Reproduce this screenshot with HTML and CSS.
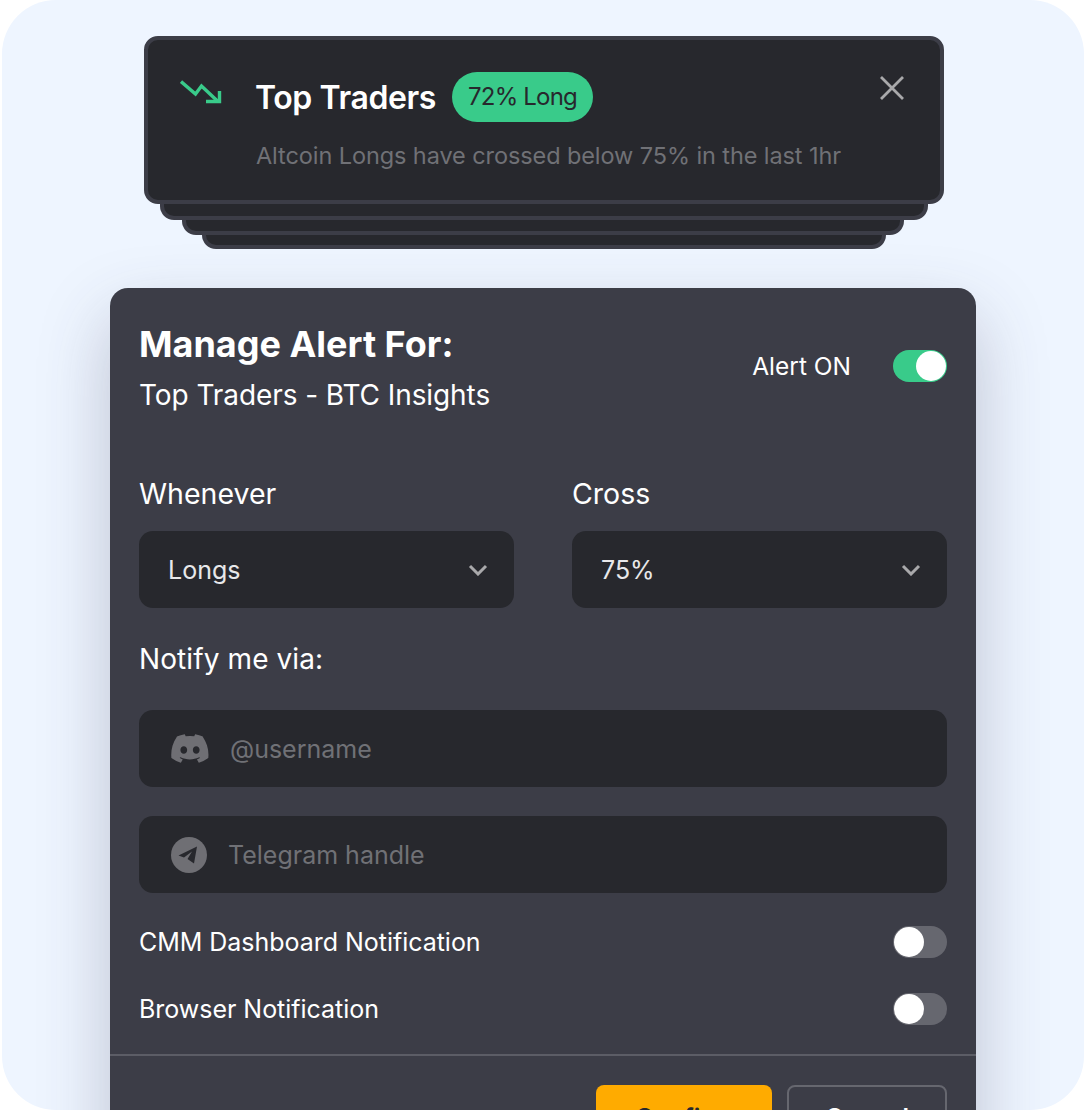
FILE: index.html
```html
<!DOCTYPE html>
<html lang="en">
<head>
    <meta charset="UTF-8">
    <meta name="viewport" content="width=device-width, initial-scale=1.0">
    <title>Manage Alert</title>
    <link rel="stylesheet" href="styles.css">
</head>
<body>
    <div class="frame">
        <!-- Notification stack -->
        <div class="stack">
            <div class="toast">
                <svg class="trend-icon" width="42" height="26" viewBox="0 0 42 26" fill="none" stroke="#39cb8a" stroke-width="3.400">
                    <path d="M1 1.500 L15.500 14 L21.500 6 L38 21.500"/>
                    <path d="M26 21.500 H39.500 V11"/>
                </svg>
                <div class="toast-body">
                    <div class="toast-title">
                        <h2>Top Traders</h2>
                        <span class="pill">72% Long</span>
                    </div>
                    <p>Altcoin Longs have crossed below 75% in the last 1hr</p>
                </div>
                <svg class="close-icon" width="26" height="26" viewBox="0 0 26 26" fill="none" stroke="#a9a9ab" stroke-width="2.800">
                    <path d="M2 2 L24 24 M24 2 L2 24"/>
                </svg>
            </div>
            <div class="layer layer-1"></div>
            <div class="layer layer-2"></div>
            <div class="layer layer-3"></div>
        </div>

        <!-- Alert form -->
        <div class="panel">
            <div class="panel-head">
                <div>
                    <h1>Manage Alert For:</h1>
                    <p class="subtitle">Top Traders - BTC Insights</p>
                </div>
                <div class="alert-state">
                    <span>Alert ON</span>
                    <span class="toggle on"></span>
                </div>
            </div>

            <div class="selects">
                <div class="field">
                    <label>Whenever</label>
                    <div class="box select">
                        <span>Longs</span>
                        <svg width="20" height="12" viewBox="0 0 20 12" fill="none" stroke="#a9a9ab" stroke-width="3"><path d="M2 2 L10 10 L18 2"/></svg>
                    </div>
                </div>
                <div class="field">
                    <label>Cross</label>
                    <div class="box select">
                        <span>75%</span>
                        <svg width="20" height="12" viewBox="0 0 20 12" fill="none" stroke="#a9a9ab" stroke-width="3"><path d="M2 2 L10 10 L18 2"/></svg>
                    </div>
                </div>
            </div>

            <div class="notify-label">Notify me via:</div>

            <div class="box handle">
                <svg width="38" height="29" viewBox="0 0 71 55" fill="#6f6f74">
                    <path d="M60.100 4.900A58.500 58.500 0 0 0 45.500 .4a.2.2 0 0 0-.2.1c-.6 1.100-1.300 2.600-1.800 3.700a54 54 0 0 0-16.200 0A37 37 0 0 0 25.500.5a.2.2 0 0 0-.2-.1A58.300 58.300 0 0 0 10.700 4.900a.2.2 0 0 0-.1.1C1.500 18.700-1 32.100.2 45.300a.2.2 0 0 0 .1.2 58.800 58.800 0 0 0 17.700 9 .2.2 0 0 0 .2-.1 42 42 0 0 0 3.600-5.900.2.2 0 0 0-.1-.3 38.700 38.700 0 0 1-5.500-2.600.2.2 0 0 1 0-.4l1.100-.9a.2.2 0 0 1 .2 0c11.500 5.300 24 5.300 35.400 0a.2.2 0 0 1 .2 0l1.100.9a.2.2 0 0 1 0 .4 36.300 36.300 0 0 1-5.500 2.600.2.2 0 0 0-.1.3 47.200 47.200 0 0 0 3.600 5.900.2.2 0 0 0 .2.1 58.600 58.600 0 0 0 17.700-9 .2.2 0 0 0 .1-.2c1.500-15.200-2.500-28.500-10.500-40.300a.2.2 0 0 0-.1-.1zM23.700 37.300c-3.500 0-6.400-3.200-6.400-7.100s2.800-7.100 6.400-7.100c3.600 0 6.500 3.200 6.400 7.100 0 3.900-2.800 7.100-6.400 7.100zm23.600 0c-3.500 0-6.400-3.200-6.400-7.100s2.800-7.100 6.400-7.100c3.600 0 6.500 3.200 6.400 7.100 0 3.900-2.800 7.100-6.400 7.100z"/>
                </svg>
                <span class="placeholder">@username</span>
            </div>

            <div class="box handle">
                <svg width="36" height="36" viewBox="0 0 36 36">
                    <circle cx="18" cy="18" r="18" fill="#6f6f74"/>
                    <path d="M7.500 18.500 L26 9.500 L23 26.500 L16.500 22 L21 14.500 L13 20.500 Z" fill="#27282d"/>
                </svg>
                <span class="placeholder">Telegram handle</span>
            </div>

            <div class="check-rows">
                <div class="check-row">
                    <span>CMM Dashboard Notification</span>
                    <span class="toggle"></span>
                </div>
                <div class="check-row">
                    <span>Browser Notification</span>
                    <span class="toggle"></span>
                </div>
            </div>

            <div class="panel-foot">
                <button class="btn-primary">Confirm</button>
                <button class="btn-ghost">Cancel</button>
            </div>
        </div>
    </div>
</body>
</html>
```

FILE: styles.css
```css
* {
    margin: 0;
    padding: 0;
    box-sizing: border-box;
    font-family: Inter, "Noto Sans", sans-serif;
}

html, body {
    height: 1110px;
    overflow: hidden;
    background-color: #ffffff;
}

.frame {
    width: 1082px;
    height: 1110px;
    margin-left: 2px;
    background-color: #eef5ff;
    border-radius: 54px;
    overflow: hidden;
    padding-top: 36px;
}

/* Notification stack */
.stack {
    width: 800px;
    margin-left: 142px;
}

.toast {
    display: flex;
    position: relative;
    z-index: 4;
    height: 168px;
    padding: 32px 35px 0 32px;
    background-color: #27282d;
    border: 4px solid #3c3d47;
    border-radius: 14px;
}

.trend-icon {
    flex-shrink: 0;
    margin-top: 8px;
}

.toast-body {
    flex: 1;
    margin-left: 34px;
}

.toast-title {
    display: flex;
    align-items: center;
    gap: 16px;
}

.toast-title h2 {
    margin-left: -1px;
    font-size: 32px;
    font-weight: 600;
    color: #ffffff;
    letter-spacing: -0.4px;
}

.pill {
    height: 50px;
    line-height: 50px;
    padding: 0 16px;
    border-radius: 25px;
    background-color: #39cb8a;
    color: #27282d;
    font-size: 24px;
    letter-spacing: -0.8px;
}

.toast-body p {
    margin-top: 19px;
    font-size: 23.500px;
    color: #707176;
    letter-spacing: -0.09px;
}

.close-icon {
    flex-shrink: 0;
    margin-top: 3px;
}

.layer {
    position: relative;
    height: 20px;
    margin-top: -4px;
    background-color: #27282d;
    border: 4px solid #3c3d47;
    border-top: none;
    border-radius: 0 0 14px 14px;
}

.layer-1 {
    z-index: 3;
    margin-left: 16px;
    margin-right: 16px;
}

.layer-2 {
    z-index: 2;
    margin-left: 38px;
    margin-right: 40px;
    height: 19px;
}

.layer-3 {
    z-index: 1;
    margin-left: 58px;
    margin-right: 58px;
    height: 18px;
}

/* Alert panel */
.panel {
    width: 866px;
    height: 900px;
    margin-left: 108px;
    margin-top: 39px;
    padding: 34px 29px 0;
    background-color: #3c3d47;
    border-radius: 18px;
    box-shadow: 0 30px 70px rgba(61, 62, 90, 0.28);
}

.panel-head {
    display: flex;
    justify-content: space-between;
    align-items: flex-start;
}

.panel-head h1 {
    font-size: 36px;
    line-height: 44px;
    font-weight: 700;
    color: #ffffff;
}

.subtitle {
    margin-top: 12px;
    font-size: 28px;
    line-height: 34px;
    color: #ffffff;
    letter-spacing: -0.08px;
}

.alert-state {
    display: flex;
    align-items: center;
    gap: 42px;
    margin-top: 28px;
    font-size: 24.500px;
    color: #ffffff;
}

.toggle {
    display: block;
    position: relative;
    width: 54px;
    height: 32px;
    border-radius: 16px;
    background-color: #66676f;
}

.toggle::after {
    content: "";
    position: absolute;
    top: 1px;
    left: 1px;
    width: 30px;
    height: 30px;
    border-radius: 50%;
    background-color: #ffffff;
}

.toggle.on {
    background-color: #39cb8a;
}

.toggle.on::after {
    left: 23px;
}

.selects {
    display: grid;
    grid-template-columns: 375px 375px;
    column-gap: 58px;
    margin-top: 65px;
}

.field label {
    display: block;
    margin-bottom: 20px;
    font-size: 28.500px;
    line-height: 34px;
    color: #ffffff;
}

.box {
    display: flex;
    align-items: center;
    height: 77px;
    background-color: #27282d;
    border-radius: 14px;
}

.select {
    justify-content: space-between;
    padding: 0 26px 0 29px;
    font-size: 25px;
    color: #e8e8ea;
}

.notify-label {
    margin-top: 34px;
    margin-bottom: 34px;
    font-size: 28px;
    line-height: 34px;
    color: #ffffff;
    letter-spacing: 0.1px;
}

.handle {
    gap: 21px;
    padding-left: 32px;
    margin-bottom: 29px;
}

.placeholder {
    font-size: 25px;
    color: #707176;
}

.check-rows {
    display: flex;
    flex-direction: column;
    gap: 35px;
    padding-top: 4px;
    margin-bottom: 29px;
}

.check-row {
    display: flex;
    justify-content: space-between;
    align-items: center;
    height: 32px;
    font-size: 25px;
    color: #ffffff;
    letter-spacing: -0.03px;
}

.panel-foot {
    display: flex;
    justify-content: flex-end;
    gap: 15px;
    margin: 0 -29px;
    padding: 29px 29px 0;
    border-top: 2px solid #5c5d66;
}

.panel-foot button {
    width: 176px;
    height: 66px;
    border-radius: 8px;
    font-size: 25px;
    font-weight: 600;
}

.panel-foot .btn-primary {
    border: none;
    background-color: #ffab00;
    color: #27282d;
}

.panel-foot .btn-ghost {
    width: 160px;
    border: 2px solid #66676f;
    background-color: transparent;
    color: #ffffff;
}
```
